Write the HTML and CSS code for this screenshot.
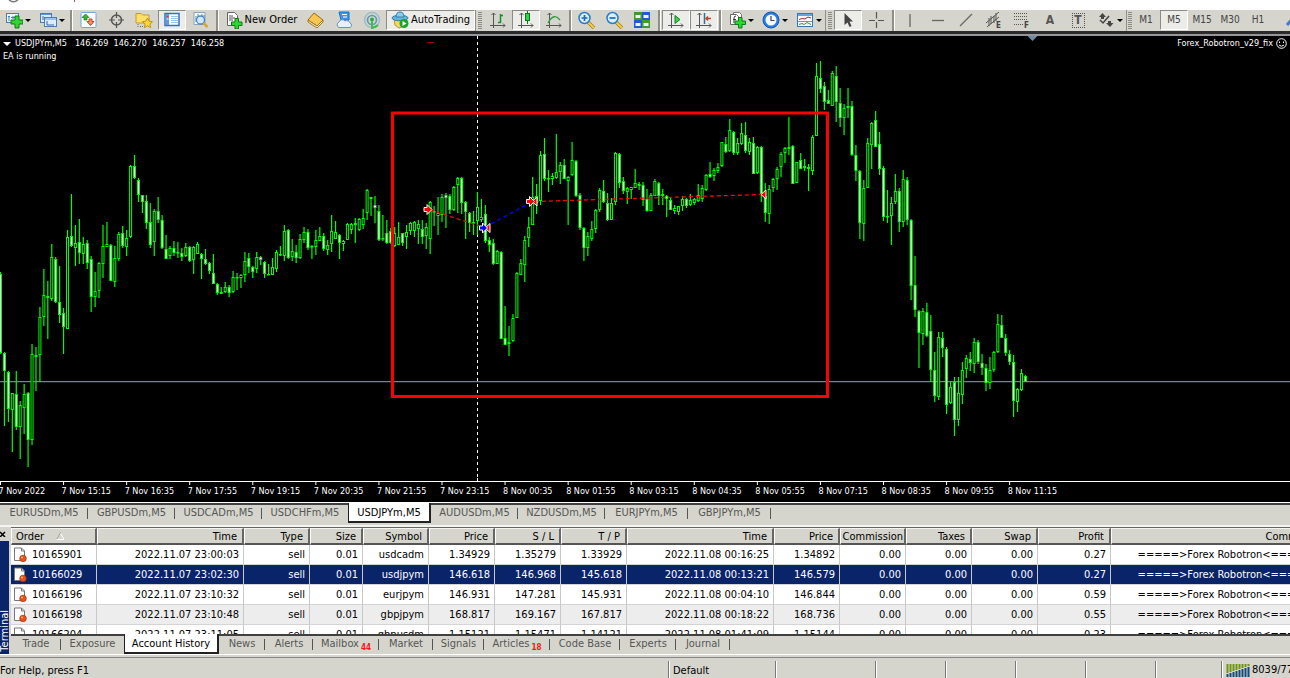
FILE: index.html
```html
<!DOCTYPE html>
<html lang="en">
<head>
<meta charset="utf-8">
<title>USDJPYm,M5</title>
<link rel="stylesheet" href="styles.css">
</head>
<body>
<div class="caption-strip" aria-hidden="true">
  <svg class="caption-marks" width="90" height="10"><path d="M9 0Q13.500 3.500 18 0" fill="none" stroke="#777" stroke-width="1.500"/><path d="M74.500 0V2" stroke="#b45a78"/></svg>
</div>

<header class="toolbar">
  <button class="tool drop" aria-label="New chart"><svg class="icon" viewBox="0 0 18 18"><rect x="1.500" y="2.500" width="12" height="9" fill="#eef6ff" stroke="#4b7db5"/><path d="M4 5v5M3 6l1-1 1 1M8 5v3M6 6.500h5" stroke="#4b7db5" fill="none"/><path d="M10 5h4v4h4v4h-4v4h-4v-4H6V9h4z" fill="#31d531" stroke="#0b7d16"/></svg><span class="caret"></span></button>
  <button class="tool drop" aria-label="Profiles"><svg class="icon" viewBox="0 0 18 18"><rect x="1.500" y="2.500" width="11" height="9" fill="#dcecff" stroke="#4b7db5"/><rect x="5.500" y="6.500" width="12" height="9" fill="#dcecff" stroke="#4b7db5"/><path d="M2 3.500h10M6 8h11" stroke="#5a96d8"/><path d="M8 10v4h7M4 5v4" stroke="#3468a8" fill="none"/></svg><span class="caret"></span></button>
  <i class="sep w6"></i>
  <button class="tool" aria-label="Market Watch"><svg class="icon" viewBox="0 0 18 18"><rect x="2" y="1.500" width="15" height="15" rx="1" fill="#fff" stroke="#6fa8d8"/><path d="M6.500 3l3.500 3.500H8V9H5V6.500H3z" fill="#2dbb3a" stroke="#117a1c" stroke-width=".7"/><path d="M10 8h3v2.500h2L11.500 14.500 8 10.500h2z" fill="#ff8a65" stroke="#c6401f"/></svg></button>
  <button class="tool" aria-label="Data Window"><svg class="icon" viewBox="0 0 18 18"><circle cx="9.500" cy="9" r="5" fill="none" stroke="#555" stroke-width="1.500"/><path d="M9.500 1v6M9.500 11v6M2 9h6M11 9h6" stroke="#555" stroke-width="1.200"/></svg></button>
  <button class="tool" aria-label="Navigator"><svg class="icon" viewBox="0 0 18 18"><path d="M1 4V2.500h5L7.500 4H14v8H1z" fill="#ffdf6b" stroke="#c99a22"/><path d="M3 13v3M5 15.500h3" stroke="#666" stroke-dasharray="1 1"/><path d="M12.500 7l1.600 3.200 3.400.5-2.500 2.400.6 3.500-3.100-1.700-3.100 1.700.6-3.500L7.500 10.700l3.400-.5z" fill="#ffd633" stroke="#b98a12" stroke-width=".9"/></svg></button>
  <button class="tool pressed" aria-label="Terminal"><svg class="icon" viewBox="0 0 18 18"><rect x="2" y="2.500" width="14" height="12" fill="#fff" stroke="#2f72c4" stroke-width="1.500"/><path d="M3 3h3v11H3z" fill="#5b9ae8"/><path d="M8 5.500h7M8 7.500h7M8 9.500h7M8 11.500h7" stroke="#9cc3ea"/><path d="M3.500 5.500h2" stroke="#e33"/><path d="M3.500 8h2" stroke="#fff"/></svg></button>
  <button class="tool" aria-label="Strategy Tester"><svg class="icon" viewBox="0 0 18 18"><path d="M3 1.500h11v12H3z" fill="#f6f9fc" stroke="#8ba2b8"/><path d="M5 5v6M7 3v4M11 3v4M13 4v3" stroke="#67859f"/><circle cx="9.500" cy="9" r="4" fill="#d3e9fb" stroke="#4787bf" stroke-width="1.300"/><path d="M12.500 12l4 4" stroke="#d9a62b" stroke-width="2.500"/></svg></button>
  <i class="sep w6"></i>
  <button class="tool wide order"><svg class="icon" viewBox="0 0 18 18"><path d="M2.500 1.500h7l3 3v10h-10z" fill="#fff" stroke="#666"/><path d="M4 5h4M4 7h6M4 9h4" stroke="#555"/><path d="M10 7.500h3.500V11H17v3.500h-3.500V18H10v-3.500H6.500V11H10z" fill="#31d531" stroke="#0b7d16"/></svg>New Order</button>
  <button class="tool" aria-label="MetaEditor"><svg class="icon" viewBox="0 0 18 18"><path d="M7 2l9 7-6 6-9-6z" fill="#f6c853" stroke="#9b6a12"/><path d="M1 9v2l9 6 6-6V9l-6 6z" fill="#fff0c0" stroke="#9b6a12" stroke-width=".9"/></svg></button>
  <button class="tool" aria-label="Virtual hosting"><svg class="icon" viewBox="0 0 18 18"><path d="M4 1h10v8H6z" fill="#3d97ee" stroke="#1d6fc2"/><path d="M7 3.500h5M8 6h4" stroke="#fff"/><path d="M4 16.500a3 3 0 0 1 0-5.500 3.500 3.500 0 0 1 6-1 3.500 3.500 0 0 1 5 2 2.400 2.400 0 0 1 0 4.500z" fill="#e6f1ff" stroke="#6d8fc0"/></svg></button>
  <button class="tool" aria-label="Signals"><svg class="icon" viewBox="0 0 18 18"><circle cx="9" cy="9" r="7.500" fill="none" stroke="#9fbccb" stroke-width="1.500"/><circle cx="9" cy="9" r="4.500" fill="none" stroke="#5d9ab0" stroke-width="1.700"/><circle cx="9" cy="8.500" r="2" fill="#2faa45"/><path d="M9 10v7q4-1 6-3" fill="none" stroke="#45b955" stroke-width="2"/></svg></button>
  <button class="tool wide pressed auto"><svg class="icon" viewBox="0 0 18 18"><path d="M3 8h12l-2 7-5 2-4-3z" fill="#f8d665" stroke="#c0922a"/><ellipse cx="9" cy="7" rx="8" ry="2.800" fill="#68b4de" stroke="#337da9"/><path d="M5 6q0-5 4-5t4 5z" fill="#8accec" stroke="#337da9"/><circle cx="13" cy="12.500" r="4.500" fill="#18a52a"/><path d="M11.500 10v5l4-2.500z" fill="#fff"/></svg>AutoTrading</button>
  <i class="grip w9"></i>
  <button class="tool" aria-label="Bar chart"><svg class="icon" viewBox="0 0 18 18"><path d="M4.500 2v15M1 14.500h15M2.500 4l2-2 2 2M14 12.500l2 2-2 2" fill="none" stroke="#555"/><path d="M11.500 3v9M9 11.500h2.500M11.500 4.500H14" stroke="#16902c" stroke-width="1.500" fill="none"/></svg></button>
  <button class="tool pressed" aria-label="Candlesticks"><svg class="icon" viewBox="0 0 18 18"><path d="M4.500 2v15M1 14.500h15M2.500 4l2-2 2 2M14 12.500l2 2-2 2" fill="none" stroke="#555"/><path d="M10.500 0v13" stroke="#0c7a1b"/><rect x="8.500" y="2.500" width="4" height="7" fill="#2ed34a" stroke="#0c7a1b"/></svg></button>
  <button class="tool" aria-label="Line chart"><svg class="icon" viewBox="0 0 18 18"><path d="M4.500 2v15M1 14.500h15M2.500 4l2-2 2 2M14 12.500l2 2-2 2" fill="none" stroke="#555"/><path d="M3 12q6-11 12-3" fill="none" stroke="#2f9a40" stroke-width="1.300"/></svg></button>
  <i class="sep w4"></i>
  <button class="tool" aria-label="Zoom in"><svg class="icon" viewBox="0 0 18 18"><path d="M11 11l6 6" stroke="#a87c16" stroke-width="3.500"/><path d="M11 11l6 6" stroke="#f5cd4c" stroke-width="2"/><circle cx="7.500" cy="7" r="5.500" fill="#d9efff" stroke="#2c7bc5" stroke-width="1.500"/><path d="M4.500 7h6M7.500 4v6" stroke="#1f69b4" stroke-width="1.700"/></svg></button>
  <button class="tool" aria-label="Zoom out"><svg class="icon" viewBox="0 0 18 18"><path d="M11 11l6 6" stroke="#a87c16" stroke-width="3.500"/><path d="M11 11l6 6" stroke="#f5cd4c" stroke-width="2"/><circle cx="7.500" cy="7" r="5.500" fill="#d9efff" stroke="#2c7bc5" stroke-width="1.500"/><path d="M4.500 7h6" stroke="#1f69b4" stroke-width="1.700"/></svg></button>
  <button class="tool" aria-label="Tile windows"><svg class="icon" viewBox="0 0 18 18"><path d="M1 1h8v8H1zM9 9h8v8H9z" fill="#3f9c2c"/><path d="M9 1h8v8H9zM1 9h8v8H1z" fill="#2559cf"/><path d="M2.500 4h5v3h-5zM10.500 4h5v3h-5zM2.500 12h5v3h-5zM10.500 12h5v3h-5z" fill="#e8f4ff"/></svg></button>
  <i class="sep w6"></i>
  <button class="tool pressed" aria-label="Auto scroll"><svg class="icon" viewBox="0 0 18 18"><path d="M4.500 2v15M1 14.500h15M2.500 4l2-2 2 2M14 12.500l2 2-2 2" fill="none" stroke="#555"/><path d="M8 4.500l5 4-5 4z" fill="#3fd04e" stroke="#15802a"/></svg></button>
  <button class="tool pressed" aria-label="Chart shift"><svg class="icon" viewBox="0 0 18 18"><path d="M4.500 2v15M1 14.500h15M2.500 4l2-2 2 2M14 12.500l2 2-2 2" fill="none" stroke="#555"/><path d="M9.500 2v11" stroke="#2872a8" stroke-width="1.500"/><path d="M16 7.500h-5M13 5.500l-2 2 2 2" stroke="#c63c1c" stroke-width="1.300" fill="none"/></svg></button>
  <i class="sep w5"></i>
  <button class="tool drop" aria-label="Indicators"><svg class="icon" viewBox="0 0 18 18"><path d="M5.500 1.500h6l2 2v8h-8z" fill="#fff" stroke="#777"/><path d="M2.500 3.500h6l2 2v8h-8z" fill="#fff" stroke="#666"/><path d="M6 12V7q0-2 2-2M5 8.500h3" fill="none" stroke="#333"/><path d="M10.500 6.500h3.500V10h3.500v3.500H14V17h-3.500v-3.500H7V10h3.500z" fill="#31d531" stroke="#0b7d16"/></svg><span class="caret"></span></button>
  <button class="tool drop" aria-label="Periodicity"><svg class="icon" viewBox="0 0 18 18"><circle cx="9" cy="9" r="8" fill="#2b7ce2" stroke="#1558ad"/><circle cx="9" cy="9" r="5.500" fill="#f3f9ff"/><path d="M9 5v4.500h3.500" fill="none" stroke="#444" stroke-width="1.200"/></svg><span class="caret"></span></button>
  <button class="tool drop" aria-label="Templates"><svg class="icon" viewBox="0 0 18 18"><rect x="1.500" y="2.500" width="15" height="13" fill="#f7fbff" stroke="#3477c0"/><path d="M2 4h14" stroke="#62a3e6" stroke-width="2"/><path d="M3 8.500l3-1 3 .5 3-2 3 1" fill="none" stroke="#9d2e2e"/><path d="M2 10.500h14" stroke="#6a9bd0"/><path d="M3 13.500l3-1 2 1 3-2 4 2" fill="none" stroke="#2e9b3f"/></svg><span class="caret"></span></button>
  <i class="grip w9"></i>
  <button class="tool pressed" aria-label="Cursor"><svg class="icon" viewBox="0 0 18 18"><path d="M5.500 2v12l3-2.500 2 4.500 2-1-2-4.500h3.500z" fill="#444"/></svg></button>
  <button class="tool" aria-label="Crosshair"><svg class="icon" viewBox="0 0 18 18"><path d="M9.500 1v6.500M9.500 11v6M2 9.500h6M11 9.500h6" stroke="#555" stroke-width="1.200"/></svg></button>
  <i class="sep w6"></i>
  <button class="tool" aria-label="Vertical line"><svg class="icon" viewBox="0 0 18 18"><path d="M9 3v13" stroke="#666" stroke-width="1.300"/></svg></button>
  <button class="tool" aria-label="Horizontal line"><svg class="icon" viewBox="0 0 18 18"><path d="M3 9.500h12" stroke="#666" stroke-width="1.300"/></svg></button>
  <button class="tool" aria-label="Trendline"><svg class="icon" viewBox="0 0 18 18"><path d="M3 15L15 3" stroke="#666" stroke-width="1.300"/></svg></button>
  <button class="tool" aria-label="Equidistant channel"><svg class="icon" viewBox="0 0 18 18"><path d="M1 12L14 1M2 16L14 6M4 7v8M6 5v8M9 5v7M11 2v8" stroke="#555"/><text class="glyph" x="11" y="17">E</text></svg></button>
  <button class="tool" aria-label="Fibonacci retracement"><svg class="icon" viewBox="0 0 18 18"><path d="M1 2.500h14M1 5.500h14M1 8.500h14M1 13.500h9" stroke="#555" stroke-dasharray="1 1"/><text class="glyph" x="11" y="17">F</text></svg></button>
  <button class="tool letter" aria-label="Text">A</button>
  <button class="tool letter" aria-label="Text label"><span class="dotted">T</span></button>
  <button class="tool drop" aria-label="Arrows"><svg class="icon" viewBox="0 0 18 18"><path d="M5.500 2L9 6H7v2H4V6H2zM9 12h2v-2h3v2h2.500L13 16z" fill="#444"/><path d="M3 9l3 3 6-7" fill="none" stroke="#444" stroke-width="1.500"/></svg><span class="caret"></span></button>
  <i class="grip w6"></i>
  <button class="tool period">M1</button>
  <button class="tool period pressed">M5</button>
  <button class="tool period">M15</button>
  <button class="tool period">M30</button>
  <button class="tool period">H1</button>
  <button class="tool" aria-label="More"><svg class="icon" viewBox="0 0 18 18"><path d="M10 14l6-7" stroke="#3d79d8" stroke-width="3"/></svg></button>
</header>

<main class="chart">
  <svg class="plot" id="plot" role="img" aria-label="USDJPYm five minute candlestick chart"></svg>
  <div class="chart-head">
    <p class="chart-title"><span class="tri"></span><span>USDJPYm,M5</span><span class="quote">146.269&nbsp; 146.270&nbsp; 146.257&nbsp; 146.258</span></p>
    <p class="chart-expert">Forex_Robotron_v29_fix
      <svg width="11" height="11" viewBox="0 0 11 11"><circle cx="5.500" cy="5.500" r="4.800" fill="none" stroke="#fff"/><path d="M3.500 3.500v1.500M7.500 3.500v1.500M3 7q2.500 2.500 5 0" fill="none" stroke="#fff"/></svg></p>
  </div>
  <p class="chart-note">EA is running</p>
</main>

<nav class="chart-tabs" aria-label="Charts">
  <button class="tab">EURUSDm,M5</button><button class="tab">GBPUSDm,M5</button><button class="tab">USDCADm,M5</button><button class="tab before">USDCHFm,M5</button><button class="tab active">USDJPYm,M5</button><button class="tab">AUDUSDm,M5</button><button class="tab">NZDUSDm,M5</button><button class="tab">EURJPYm,M5</button><button class="tab">GBPJPYm,M5</button>
</nav>

<section class="terminal">
  <aside class="side"><button class="close" aria-label="Close"><svg width="6" height="6" viewBox="0 0 6 6"><path d="M0 1l5 5M5 1L0 6" stroke="#000" stroke-width="1.500"/></svg></button><div class="side-title"><span>Terminal</span></div></aside>
  <div class="terminal-body">
    <div class="table-wrap">
      <table class="history">
        <colgroup><col class="c-order"><col class="c-time"><col class="c-num"><col class="c-size"><col class="c-num"><col class="c-num"><col class="c-num"><col class="c-num"><col class="c-time"><col class="c-num"><col class="c-num"><col class="c-num"><col class="c-num"><col class="c-profit"><col class="c-comment"></colgroup>
        <thead><tr><th class="first">Order<svg class="sort" width="9" height="8" viewBox="0 0 9 8"><path d="M1 7.500L4.500 1 8 7.500z" fill="none" stroke="#fff"/><path d="M1 7L4.500.5" stroke="#999"/></svg></th><th>Time</th><th>Type</th><th>Size</th><th>Symbol</th><th>Price</th><th>S / L</th><th>T / P</th><th>Time</th><th>Price</th><th class="tight">Commission</th><th>Taxes</th><th>Swap</th><th>Profit</th><th class="tight">Comment</th></tr></thead>
        <tbody id="orders"></tbody>
      </table>
    </div>
    <nav class="terminal-tabs" aria-label="Terminal">
      <button class="tab">Trade</button><button class="tab before">Exposure</button><button class="tab active">Account History</button><button class="tab">News</button><button class="tab">Alerts</button><button class="tab">Mailbox<sub class="count">44</sub></button><button class="tab">Market</button><button class="tab">Signals</button><button class="tab">Articles<sub class="count">18</sub></button><button class="tab">Code Base</button><button class="tab">Experts</button><button class="tab">Journal</button>
    </nav>
  </div>
</section>

<footer class="status">
  <span class="help">For Help, press F1</span><span class="cell">Default</span><span class="cell"></span><span class="cell"></span><span class="cell"></span><span class="cell"></span><span class="cell"></span><span class="cell"></span>
  <span class="cell link"><svg class="bars" width="24" height="14" viewBox="0 0 24 14"><path d="M1.500 1v9M4.500 1v8M7.500 1v7M10.500 1v6M13.500 1v5M16.500 1v4M19.500 1v3M22.500 1v2" stroke="#6e9414" stroke-width="2"/><path d="M1.500 11v3M4.500 10v4M7.500 9v5M10.500 8v6M13.500 7v7M16.500 6v8M19.500 5v9M22.500 4v10" stroke="#164a78" stroke-width="2"/></svg>8039/77</span>
</footer>
<script src="chart.js"></script>
</body>
</html>
```

FILE: styles.css
```css
* { box-sizing: border-box; }
body {
  margin: 0;
  height: 100vh;
  display: flex;
  flex-direction: column;
  overflow: hidden;
  background: #d5d5cd;
  color: #000;
  font: 11px/14px "DejaVu Sans Condensed", "DejaVu Sans", Tahoma, sans-serif;
}
p { margin: 0; }
button {
  border: 0;
  padding: 0;
  margin: 0;
  background: none;
  font: inherit;
  color: inherit;
  white-space: nowrap;
}

.caption-strip { flex: none; height: 10px; background: #fff; }
.caption-marks { display: block; }

.toolbar {
  flex: none;
  display: flex;
  height: 24px;
  overflow: hidden;
  border-bottom: 3px solid #2c2c2c;
}
.tool {
  flex: none;
  width: 28px;
  height: 20px;
  display: flex;
  align-items: center;
  justify-content: center;
}
.tool.drop { width: 34px; justify-content: flex-start; padding-left: 5px; gap: 2px; }
.tool.wide { gap: 2px; }
.tool.order { width: 82px; }
.tool.auto { width: 89px; }
.icon { flex: none; width: 18px; height: 18px; }
.caret { border: 3px solid transparent; border-top-color: #000; border-bottom: 0; }
.pressed {
  background: #ecece8;
  border: 1px solid;
  border-color: #8c8c86 #fff #fff #8c8c86;
}
.letter { color: #555; font-weight: bold; font-size: 12px; }
.dotted { border: 1px dotted #555; width: 13px; line-height: 13px; }
.glyph { font-size: 8px; font-weight: bold; fill: #444; }
.period { color: #444; font-size: 10px; }
.sep, .grip { flex: none; display: flex; justify-content: center; }
.sep::before { content: ""; width: 2px; background: #8f8f88; border-right: 1px solid #fff; }
.grip { align-items: center; border-left: 1px solid #8f8f88; }
.grip::before {
  content: "";
  width: 4px;
  height: 17px;
  background: repeating-linear-gradient(#8c8c86 0 1px, #d5d5cd 1px 2px);
}
.w4 { width: 4px; }
.w5 { width: 5px; }
.w6 { width: 6px; }
.w9 { width: 9px; }

.chart {
  flex: 1;
  min-height: 0;
  position: relative;
  background: #000;
  color: #fff;
  border-top: 2px solid #98969c;
  border-bottom: 1px solid #fff;
  font-size: 9px;
  line-height: 13px;
}
.plot { position: absolute; inset: 0; width: 100%; height: 100%; }
.chart-head { position: relative; display: flex; justify-content: space-between; padding: 1px 3px 0; }
.chart-title, .chart-expert { display: flex; align-items: center; gap: 3px; }
.chart-title { gap: 4px; }
.quote { padding-left: 4px; }
.chart-note { position: relative; padding-left: 3px; }
.tri { border: 4px solid transparent; border-top-color: #fff; border-bottom: 0; }
.axis-label { fill: #fff; font-size: 9px; }

.chart-tabs, .terminal-tabs { display: grid; border-top: 2px solid #404040; }
.chart-tabs {
  flex: none;
  height: 24px;
  grid-template-columns: 88px 87px 87px 86px 83px 87px 87px 83px 83px;
  border-bottom: 2px solid #f4f4f0;
}
.tab { position: relative; height: 16px; line-height: 16px; color: #555; }
.tab::after { content: ""; position: absolute; right: 0; top: 3px; height: 11px; border-right: 1px solid #555; }
.tab.before::after, .tab.active::after { display: none; }
.tab.active {
  background: #fff;
  color: #000;
  border: solid #222;
  border-width: 0 2px 2px 1px;
  margin-top: -2px;
  padding-top: 2px;
  height: 20px;
}
.count { color: #f01818; font-size: 8px; font-weight: bold; line-height: 1px; padding-left: 2px; }

.terminal { flex: none; display: flex; height: 127px; }
.side { width: 11px; flex: none; display: flex; flex-direction: column; }
.close { height: 14px; width: 6px; display: flex; align-items: center; }
.side-title { flex: 1; width: 9px; background: #0a246a; color: #fff; overflow: hidden; display: flex; align-items: flex-end; justify-content: center; padding-bottom: 2px; }
.side-title span { writing-mode: vertical-rl; transform: rotate(180deg); line-height: 9px; }
.terminal-body { flex: 1; min-width: 0; }
.table-wrap { height: 107px; overflow: hidden; background: #fff; border-top: 1px solid #666; }
.history { border-collapse: separate; border-spacing: 0; table-layout: fixed; width: 1306px; }
.history th {
  height: 17px;
  padding: 1px 5px 0 4px;
  background: #d5d5cd;
  font-weight: normal;
  text-align: right;
  line-height: 13px;
  white-space: nowrap;
  border: solid;
  border-width: 1px 2px 2px 1px;
  border-color: #f4f4f0 #666 #555 #fff;
}
.history .first { text-align: left; }
.history .tight { padding-left: 1px; padding-right: 1px; }
.sort { margin-left: 12px; }
.history td {
  height: 20px;
  padding: 0 4px 0 2px;
  text-align: right;
  line-height: 14px;
  white-space: nowrap;
  border-right: 1px solid #c8c8c8;
  border-bottom: 1px solid #d4d4d4;
}
.history tr:nth-child(even) td { background: #ededed; }
.history tr.selected td { background: #0a246a; color: #fff; }
.order-no { display: flex; align-items: center; gap: 5px; }
.c-order { width: 86px; }
.c-time { width: 147px; }
.c-num { width: 66px; }
.c-size { width: 53px; }
.c-profit { width: 73px; }
.c-comment { width: 206px; }
.terminal-tabs {
  height: 20px;
  grid-template-columns: 50px 63px 95px 46px 48px 66px 54px 51px 66px 70px 56px 54px;
}

.status {
  flex: none;
  height: 24px;
  display: flex;
  overflow: hidden;
  border-top: 1px solid #fff;
  box-shadow: inset 0 2px #d5d5cd, inset 0 3px #888;
  padding-top: 6px;
  line-height: 20px;
  white-space: nowrap;
}
.help { flex: 1; min-width: 0; }
.cell { flex: none; width: 70px; border-left: 1px solid #777; box-shadow: inset 1px 0 #fff; padding-left: 4px; }
.cell:nth-child(2) { width: 107px; }
.cell:nth-child(3) { width: 100px; }
.cell:nth-child(8) { width: 66px; }
.bars { flex: none; }
.cell.link { display: flex; align-items: center; gap: 2px; width: 69px; }
```

FILE: chart.js
```js
const NS = "http://www.w3.org/2000/svg";
const TOP = 36;
const STEP = 3.942;
const at = i => 0.5 + STEP * i;

// high, body top, body bottom, low; a trailing 1 marks a falling candle
const candles = `272 274 353 354 1|352 353 371 426 1|371 372 409 422 1|393 393 410 452|371 394 427 430 1|401 405 427 459|384 394 408 434|392 393 440 467 1|344 354 440 445|347 355 357 391
307 317 355 382|269 295 317 326|281 296 298 339 1|244 257 299 301|257 259 302 303 1|266 302 315 323 1|308 313 327 354 1|230 237 329 329|194 236 246 247 1|225 243 248 266
219 242 253 264 1|237 244 254 264|240 243 263 269 1|256 259 297 312 1|272 291 297 307|262 263 291 298|225 246 264 278|222 244 247 247|244 245 281 281 1|246 258 282 287
232 234 259 261|226 233 246 248 1|230 238 247 256|165 166 237 238|155 166 178 179 1|178 180 195 202 1|195 195 202 213 1|195 201 223 229 1|203 222 245 248 1|209 211 242 256
197 211 220 223 1|215 220 248 249 1|235 249 259 259 1|246 248 256 259|241 248 253 256 1|242 252 253 258|248 253 257 261 1|243 247 256 257|246 247 261 262 1|246 247 260 274
242 244 254 254|253 254 259 279 1|249 259 264 265 1|262 263 271 274 1|254 273 284 284 1|283 284 293 295 1|287 292 294 294|282 287 292 293|285 287 293 297 1|271 277 292 293
273 277 278 290|274 275 278 288|252 261 275 282|253 258 267 273 1|266 267 272 278 1|252 257 269 273|256 257 260 265 1|261 262 274 278 1|264 274 275 275 1|258 267 275 275
250 252 269 272|246 254 255 256 1|225 231 256 261|229 230 258 259 1|239 251 257 261|245 252 258 263 1|234 239 258 259|227 232 240 243|229 232 248 250 1|245 246 247 259
230 240 247 255|227 236 241 241|233 236 249 251 1|240 245 250 255|215 231 244 252|221 232 239 239|234 235 243 259 1|240 241 244 251|223 224 240 240|223 224 230 234
218 223 225 243|218 219 230 231|209 218 225 229|189 190 213 220|197 197 199 216|196 205 208 223 1|205 211 240 241 1|215 238 239 241 1|220 233 243 244 1|228 231 243 244 1
227 233 246 247|222 237 245 245|233 233 243 246 1|225 232 237 249|222 223 231 235|221 222 231 237|220 224 229 244|220 229 237 244 1|223 227 236 249|201 202 239 254
206 211 212 226|197 213 216 235|194 197 215 222|193 195 198 228 1|194 196 210 214 1|186 187 210 211|177 178 185 213|177 178 203 214 1|201 202 212 239 1|212 213 223 232 1
211 222 223 235|192 207 221 235|199 217 220 222|205 214 241 243 1|237 240 245 252 1|239 243 264 265 1|250 251 264 264|251 252 339 339 1|306 338 345 345 1|326 342 344 356
314 318 341 342|272 273 318 318|259 263 275 275|236 240 265 282|217 227 238 247|177 197 225 225|184 196 203 214 1|151 155 201 205|138 154 179 181 1|170 178 179 192 1
173 176 179 185|134 172 178 179|162 165 172 184|159 165 179 179 1|176 177 181 225|142 160 175 176|160 161 196 197 1|193 195 228 230 1|227 228 248 261 1|232 236 248 256
221 229 239 241|209 210 229 233|188 190 210 212|180 191 202 203 1|193 203 220 221 1|198 203 220 220|152 153 202 205|153 154 183 188 1|177 181 191 194 1|187 188 192 204
187 187 190 199|169 183 188 188|182 184 186 190 1|182 185 200 206 1|189 199 211 212 1|193 195 211 211|179 181 196 196|182 183 196 205 1|189 194 196 205 1|195 196 199 217 1
198 200 210 210 1|205 208 211 214|206 206 212 215|196 199 206 211|198 199 206 208 1|194 200 205 206|198 199 203 205|184 195 201 202|185 188 199 202|174 175 190 191
162 174 177 178 1|168 170 176 181|163 167 171 173|142 142 166 167|137 144 152 153 1|119 130 151 152|131 132 153 155 1|138 143 153 155|123 133 144 145|122 135 151 153 1
138 142 152 155|137 143 174 174 1|146 147 173 174|146 147 194 202 1|183 196 213 222 1|185 189 214 224|178 179 188 192|167 169 179 190|152 154 167 177|147 148 153 163
117 147 149 155|145 146 184 184 1|162 162 183 183|153 160 169 169 1|159 166 168 171|164 167 169 191 1|135 137 171 175|63 76 136 136|61 78 89 93 1|82 86 102 110 1
90 100 104 104 1|71 73 106 106|66 76 102 122 1|88 103 118 127 1|104 108 118 135|88 106 108 118|101 106 155 156 1|145 155 171 181 1|170 171 223 239 1|180 188 224 241
138 143 188 188|122 123 145 169|111 120 147 147 1|132 144 169 175 1|166 168 217 221 1|190 216 217 223|197 203 216 245|174 191 202 204|188 191 222 232 1|170 179 222 227
177 180 220 225 1|219 220 286 300 1|256 285 310 317 1|310 311 333 368 1|308 311 334 345|303 312 336 337 1|315 331 370 382 1|352 370 396 402 1|332 337 397 400|332 338 348 357 1
347 349 405 414 1|382 387 403 404|377 382 420 436 1|377 393 420 426|362 370 395 404|355 358 369 378|352 359 363 371 1|338 342 364 373|340 342 362 364 1|354 363 368 375 1
364 368 383 391 1|357 370 383 389|351 352 370 372|314 324 352 353|315 325 338 338 1|334 338 353 356 1|350 354 362 365 1|355 362 401 417 1|388 389 402 412|369 373 390 391
375 376 382 382 1`.split(/[|\n]/).map(s => s.split(" ").map(Number));

const plot = document.getElementById("plot");
const layer = document.createElementNS(NS, "g");
layer.setAttribute("transform", `translate(0 ${-TOP})`);
plot.append(layer);

function draw(tag, attrs, text) {
  const el = document.createElementNS(NS, tag);
  for (const [k, v] of Object.entries(attrs)) el.setAttribute(k, v);
  if (text) el.textContent = text;
  layer.append(el);
}
function line(x1, y1, x2, y2, stroke, dash = "none", width = 1) {
  draw("line", { x1, y1, x2, y2, stroke, "stroke-dasharray": dash, "stroke-width": width });
}

// current price, day separator, time axis
line(0, 381.6, "100%", 381.6, "#708498", "none", 1.3);
line(477.5, 36, 477.5, 478, "#fff", "3 3");
line(477.5, 478, 477.5, 481, "#fff");
line(0, 481.5, "100%", 481.5, "#fff");

candles.forEach(([high, top, bottom, low, falling], i) => {
  const x = at(i);
  line(x, high, x, top, "#0f0", "none", 1.2);
  line(x, bottom, x, low, "#0f0", "none", 1.2);
  draw("rect", {
    x: x - 1, y: top + 0.5, width: 2, height: Math.max(bottom - top - 1, 0.5),
    fill: falling ? "#fff" : "#000", stroke: "#0f0"
  });
});

["7 Nov 2022", "7 Nov 15:15", "7 Nov 16:35", "7 Nov 17:55", "7 Nov 19:15", "7 Nov 20:35",
 "7 Nov 21:55", "7 Nov 23:15", "8 Nov 00:35", "8 Nov 01:55", "8 Nov 03:15", "8 Nov 04:35",
 "8 Nov 05:55", "8 Nov 07:15", "8 Nov 08:35", "8 Nov 09:55", "8 Nov 11:15"].forEach((label, n) => {
  const x = at(n * 16);
  line(x, 482, x, 485, "#fff");
  draw("text", { x: x - 2, y: 494, class: "axis-label" }, label);
});

// trades
line(430, 210, 486, 228, "#f00", "4 3", 1.3);
line(485, 227, 530, 203, "#00f", "4 3", 1.3);
line(535, 201.5, 762, 194.5, "#f00", "4 3", 1.3);
function arrow(x, y, dir, fill) {
  const d = dir > 0
    ? `M${x - 4} ${y - 2}h3v-3l5 5l-5 5v-3h-3z`
    : `M${x + 3} ${y - 4.5}v9l-5-4.500z`;
  draw("path", { d, fill, stroke: "#fff" });
}
arrow(428, 209.5, 1, "#f00");
arrow(487, 228, -1, "#f00");
arrow(483.5, 228, 1, "#00f");
arrow(534, 201.5, -1, "#f00");
arrow(530.5, 201.5, 1, "#f00");
arrow(763, 194.5, -1, "#f00");

draw("rect", { x: 392.5, y: 113, width: 435, height: 283.5, fill: "none", stroke: "#f00", "stroke-width": 3 });
line(427, 42.5, 434, 42.5, "#a00000");
draw("path", { d: "M1027.500 36h10l-5 5z", fill: "#708ba5" });

const comment = "=====>Forex Robotron<=====";
const orders = [
  ["10165901", "2022.11.07 23:00:03", "sell", "0.01", "usdcadm", "1.34929", "1.35279", "1.33929", "2022.11.08 00:16:25", "1.34892", "0.00", "0.00", "0.00", "0.27", comment],
  ["10166029", "2022.11.07 23:02:30", "sell", "0.01", "usdjpym", "146.618", "146.968", "145.618", "2022.11.08 00:13:21", "146.579", "0.00", "0.00", "0.00", "0.27", comment],
  ["10166196", "2022.11.07 23:10:32", "sell", "0.01", "eurjpym", "146.931", "147.281", "145.931", "2022.11.08 00:04:10", "146.844", "0.00", "0.00", "0.00", "0.59", comment],
  ["10166198", "2022.11.07 23:10:48", "sell", "0.01", "gbpjpym", "168.817", "169.167", "167.817", "2022.11.08 00:18:22", "168.736", "0.00", "0.00", "0.00", "0.55", comment],
  ["10166204", "2022.11.07 23:11:05", "sell", "0.01", "gbpusdm", "1.15121", "1.15471", "1.14121", "2022.11.08 01:41:09", "1.15144", "0.00", "0.00", "0.00", "0.23", comment]
];
const sheet = '<svg width="14" height="15" viewBox="0 0 14 15"><path d="M1.500 1h7l3 3v9.500h-10z" fill="#fff" stroke="#777"/><path d="M8.500 1v3h3" fill="none" stroke="#777"/><circle cx="10" cy="11.500" r="3.300" fill="#e8501c" stroke="#a8320c" stroke-width=".7"/><circle cx="9" cy="10.500" r="1" fill="#ffb08c"/></svg>';
document.getElementById("orders").innerHTML = orders.map((row, r) =>
  `<tr${r === 1 ? ' class="selected"' : ""}>` + row.map((v, c) =>
    c ? `<td>${v.replace(/</g, "&lt;")}</td>` : `<td><span class="order-no">${sheet}${v}</span></td>`
  ).join("") + "</tr>").join("");
```
